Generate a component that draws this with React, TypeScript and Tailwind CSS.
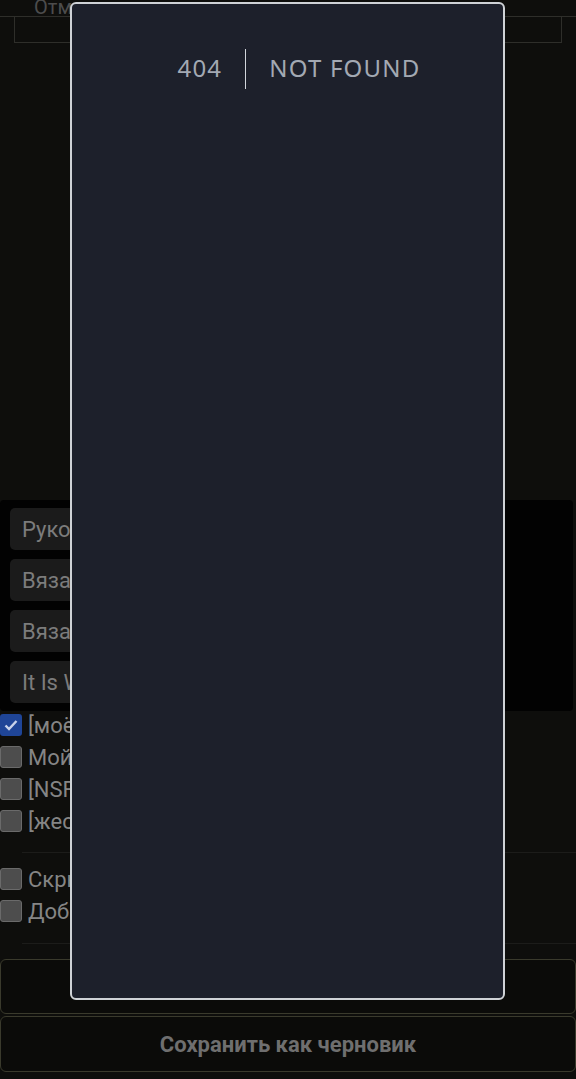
import React from 'react';

const TAGS = ['Рукоделие', 'Вязание спицами', 'Вязание крючком', 'It Is What It Is'];

const CHANNELS = [
  { label: '[моё] Личное', checked: true },
  { label: 'Мой блог', checked: false },
  { label: '[NSFW] Для взрослых', checked: false },
  { label: '[жесть] Без цензуры', checked: false },
];

const OPTIONS = ['Скрыть из ленты', 'Добавить в подборку'];

function Check({ checked, label }: { checked: boolean; label: string }) {
  return (
    <label className="flex h-[32px] items-center gap-[6px]">
      {checked ? (
        <span className="flex h-[22px] w-[22px] shrink-0 items-center justify-center rounded-[3px] bg-[#1f4597]">
          <svg viewBox="0 0 16 16" className="h-[16px] w-[16px]" fill="none" stroke="#c9d3ea" strokeWidth="2.4">
            <path d="M2.5 8.5l3.5 3.5 7.5-8" />
          </svg>
        </span>
      ) : (
        <span className="h-[22px] w-[22px] shrink-0 rounded-[3px] border border-[#6a6a6a] bg-[#4d4d4d]" />
      )}
      <span className="whitespace-nowrap text-[22px] text-[#858585]">{label}</span>
    </label>
  );
}

export default function App() {
  return (
    <div className="relative min-h-[1079px] overflow-hidden bg-[#0e0e0c] font-['Roboto',sans-serif]">
      {/* top field, mostly scrolled out of view */}
      <div className="h-[17px] border-b border-[#2e2e2a] pl-[34px] text-[20px] leading-[14px] text-[#4c4c4c]">
        Отметить
      </div>
      <div className="mx-[14px] h-[26px] border-x border-b border-[#2e2e2a]" />

      <div className="h-[457px]" />

      {/* tags panel */}
      <div className="mr-[3px] flex flex-col gap-[9px] rounded-[4px] bg-[#020202] px-[10px] pb-[8px] pt-[8px]">
        {TAGS.map((t) => (
          <div key={t} className="flex h-[42px] w-[470px] items-center whitespace-nowrap rounded-[5px] bg-[#1b1b1b] px-[12px] text-[22px] text-[#7c7c7c]">
            {t}
          </div>
        ))}
      </div>

      <div className="-mt-[2px] flex flex-col">
        {CHANNELS.map((c) => (
          <Check key={c.label} checked={c.checked} label={c.label} />
        ))}
      </div>
      <div className="ml-[22px] mt-[15px] border-t border-[#1c1c1a]" />
      <div className="flex flex-col pt-[10px]">
        {OPTIONS.map((o) => (
          <Check key={o} checked={false} label={o} />
        ))}
      </div>
      <div className="ml-[22px] mt-[16px] border-t border-[#1c1c1a]" />

      <div className="mt-[15px] flex flex-col gap-[2px]">
        <button className="h-[55px] rounded-[6px] border border-[#3a3a2c] bg-[#0b0b09] text-[22px] font-bold text-[#6f6f6f]">
          Опубликовать
        </button>
        <button className="h-[56px] rounded-[6px] border border-[#3a3a2c] bg-[#0b0b09] text-[22px] font-bold text-[#6f6f6f]">
          Сохранить как черновик
        </button>
      </div>

      {/* modal overlay with embedded error page */}
      <div className="absolute left-[70px] top-[2px] h-[998px] w-[435px] rounded-[6px] border-2 border-[#cfd2d6] bg-[#1d202b]">
        <div className="flex justify-center pt-[45px] font-['Noto_Sans',sans-serif] text-[24px] tracking-wider text-[#a3a9b3]">
          <div className="border-r border-[#d1d5db] px-[23px] pb-[3px] pt-[1px]">404</div>
          <div className="ml-[23px] pb-[3px] pt-[1px] uppercase">Not Found</div>
        </div>
      </div>
    </div>
  );
}
